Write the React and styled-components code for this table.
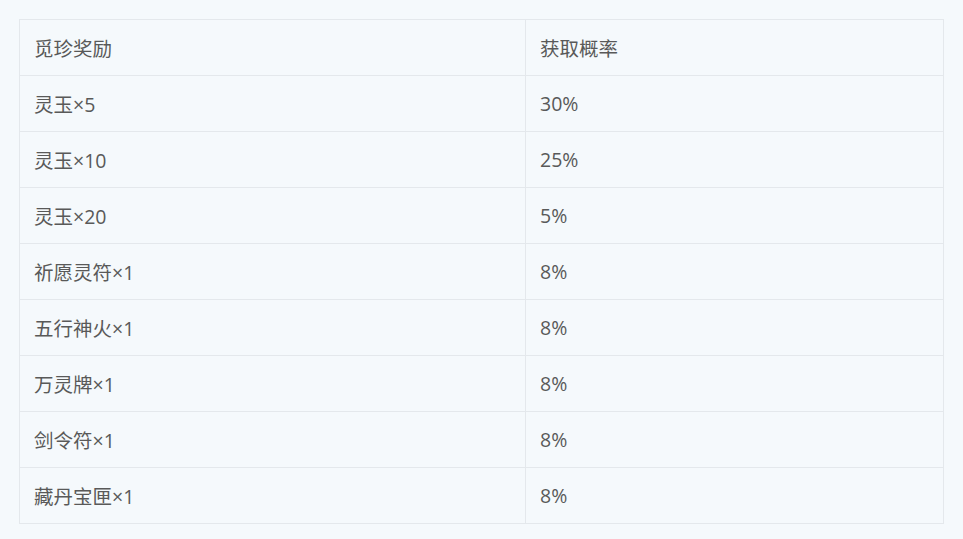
import React from "react";
import styled, { createGlobalStyle } from "styled-components";

const GlobalStyle = createGlobalStyle`
  html, body {
    margin: 0;
    padding: 0;
    background: #f5f9fc;
  }
`;

const Page = styled.div`
  padding: 19px 19px 15px 19px;
  width: 963px;
  box-sizing: border-box;
`;

const Table = styled.table`
  width: 925px;
  border-collapse: collapse;
  font-family: "Open Sans", "Noto Sans CJK SC", sans-serif;
  font-size: 19.5px;
  color: #595959;
`;

const Cell = styled.td`
  border: 1px solid #e4e8ec;
  height: 56px;
  padding: 0 14px;
  box-sizing: border-box;
  width: ${(p) => p.$w || "auto"};
  text-align: left;
  font-weight: normal;
`;

const rows = [
  ["觅珍奖励", "获取概率"],
  ["灵玉×5", "30%"],
  ["灵玉×10", "25%"],
  ["灵玉×20", "5%"],
  ["祈愿灵符×1", "8%"],
  ["五行神火×1", "8%"],
  ["万灵牌×1", "8%"],
  ["剑令符×1", "8%"],
  ["藏丹宝匣×1", "8%"],
];

const App = () => {
  return (
    <>
      <GlobalStyle />
      <Page>
        <Table>
          <tbody>
            {rows.map((r, i) => (
              <tr key={i}>
                <Cell $w="506px">{r[0]}</Cell>
                <Cell>{r[1]}</Cell>
              </tr>
            ))}
          </tbody>
        </Table>
      </Page>
    </>
  );
};

export default App;
